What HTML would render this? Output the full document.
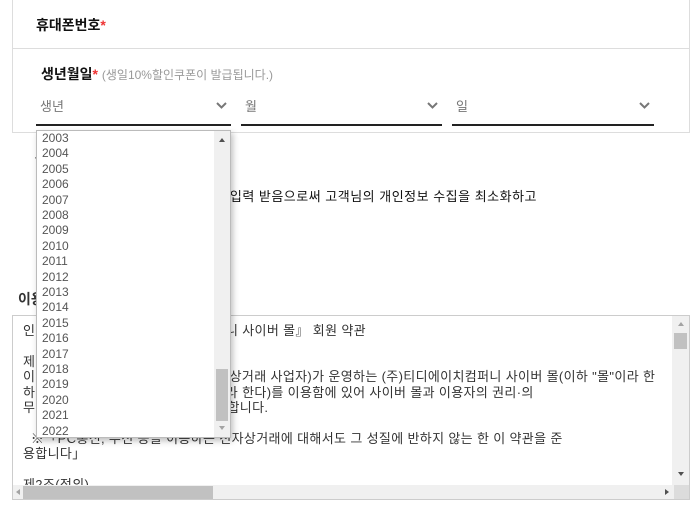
<!DOCTYPE html>
<html><head><meta charset="utf-8"><style>
*{margin:0;padding:0;box-sizing:border-box}
body{width:697px;height:507px;overflow:hidden;background:#fff;font-family:"Liberation Sans","Noto Sans CJK KR",sans-serif;position:relative;color:#222}
.abs{position:absolute;white-space:nowrap}
.req{color:#e33}
.sel{position:absolute;top:93px;height:33px;border-bottom:2px solid #222;font-size:13px;color:#777}
.sel span{position:absolute;left:4px;top:3px}
.sel svg{position:absolute;right:4px;top:9px}
.ta{position:absolute;left:12px;top:315px;width:678px;height:185px;border:1px solid #ccc;overflow:hidden}
.ta .t{position:absolute;left:10px;top:7px;font-size:13px;letter-spacing:0.35px;line-height:15.4px;color:#333;white-space:pre}
.dd{position:absolute;left:36px;top:130px;width:195px;height:308px;background:#fff;border:1px solid #bbb;box-shadow:2px 3px 6px rgba(0,0,0,.25);overflow:hidden}
.dd .it{position:absolute;left:5px;font-size:12px;color:#555}
</style></head><body>
<div class="abs" style="left:12px;top:-2px;width:678px;height:51px;border:1px solid #ddd;border-top:none"></div>
<div class="abs" style="left:12px;top:49px;width:678px;height:84px;border:1px solid #ddd;border-top:none"></div>
<div class="abs" style="left:36px;top:15px;font-size:14px;font-weight:bold;color:#111">휴대폰번호<span class="req">*</span></div>
<div class="abs" style="left:41px;top:64px;font-size:14px;font-weight:bold;color:#111">생년월일<span class="req">*</span> <span style="font-weight:normal;font-size:12px;color:#999">(생일10%할인쿠폰이 발급됩니다.)</span></div>
<div class="sel" style="left:36px;width:195px"><span>생년</span><svg width="11" height="7" viewBox="0 0 11 7"><path d="M1 1l4.5 4.5 4.5-4.5" fill="none" stroke="#777" stroke-width="2"/></svg></div>
<div class="sel" style="left:241px;width:201px"><span>월</span><svg width="11" height="7" viewBox="0 0 11 7"><path d="M1 1l4.5 4.5 4.5-4.5" fill="none" stroke="#777" stroke-width="2"/></svg></div>
<div class="sel" style="left:452px;width:202px"><span>일</span><svg width="11" height="7" viewBox="0 0 11 7"><path d="M1 1l4.5 4.5 4.5-4.5" fill="none" stroke="#777" stroke-width="2"/></svg></div>
<div class="abs" style="left:34px;top:150px;font-size:12px">·</div>
<div class="abs" style="right:160px;top:186px;font-size:13px;letter-spacing:0.5px;color:#111;text-align:right">* 회원가입 시 필수 정보만 입력 받음으로써 고객님의 개인정보 수집을 최소화하고</div>
<div class="abs" style="left:18px;top:289px;font-size:14px;font-weight:bold;color:#333">이용약관</div>
<div class="ta"><div class="t">인터넷 쇼핑몰 『(주)티디에이치컴퍼니 사이버 몰』 회원 약관

제1조(목적)
이 약관은 (주)티디에이치컴퍼니(전자상거래 사업자)가 운영하는 (주)티디에이치컴퍼니 사이버 몰(이하 "몰"이라 한
하 서비스를 이용함에 (이하 "서비스"라 한다)를 이용함에 있어 사이버 몰과 이용자의 권리·의
무 및 책임사항을 규정함을 목적으로 합니다.

  ※「PC통신, 무선 등을 이용하는 전자상거래에 대해서도 그 성질에 반하지 않는 한 이 약관을 준
용합니다」

제2조(정의)</div>
<div style="position:absolute;right:0;top:0;width:17px;height:169px;background:#f0f0f0"></div>
<div style="position:absolute;right:2px;top:17px;width:13px;height:16px;background:#c1c1c1"></div>
<div style="position:absolute;right:5px;top:6px;width:0;height:0;border:3px solid transparent;border-bottom:4px solid #a3a3a3;border-top:none"></div>
<div style="position:absolute;right:5px;top:156px;width:0;height:0;border:3px solid transparent;border-top:4px solid #505050;border-bottom:none"></div>
<div style="position:absolute;left:0;top:169px;width:661px;height:15px;background:#f0f0f0"></div>
<div style="position:absolute;left:10px;top:170px;width:190px;height:13px;background:#c1c1c1"></div>
<div style="position:absolute;left:3px;top:173px;border:3px solid transparent;border-right:4px solid #a3a3a3;border-left:none"></div>
<div style="position:absolute;left:652px;top:173px;border:3px solid transparent;border-left:4px solid #505050;border-right:none"></div>
<div style="position:absolute;left:661px;top:169px;width:17px;height:15px;background:#dcdcdc"></div>
</div>
<div class="dd">
<div style="position:absolute;right:0;top:0;width:16px;height:100%;background:#f0f0f0"></div>
<div style="position:absolute;right:2px;top:238px;width:12px;height:52px;background:#c1c1c1"></div>
<div style="position:absolute;right:5px;top:7px;border:3px solid transparent;border-bottom:4px solid #505050;border-top:none"></div>
<div style="position:absolute;right:5px;top:295px;border:3px solid transparent;border-top:4px solid #a3a3a3;border-bottom:none"></div>
<div class="it" style="top:0px">2003</div><div class="it" style="top:15.4px">2004</div><div class="it" style="top:30.8px">2005</div><div class="it" style="top:46.2px">2006</div><div class="it" style="top:61.6px">2007</div><div class="it" style="top:77px">2008</div><div class="it" style="top:92.4px">2009</div><div class="it" style="top:107.8px">2010</div><div class="it" style="top:123.2px">2011</div><div class="it" style="top:138.6px">2012</div><div class="it" style="top:154px">2013</div><div class="it" style="top:169.4px">2014</div><div class="it" style="top:184.8px">2015</div><div class="it" style="top:200.2px">2016</div><div class="it" style="top:215.6px">2017</div><div class="it" style="top:231px">2018</div><div class="it" style="top:246.4px">2019</div><div class="it" style="top:261.8px">2020</div><div class="it" style="top:277.2px">2021</div><div class="it" style="top:292.6px">2022</div>
</div>
</body></html>
